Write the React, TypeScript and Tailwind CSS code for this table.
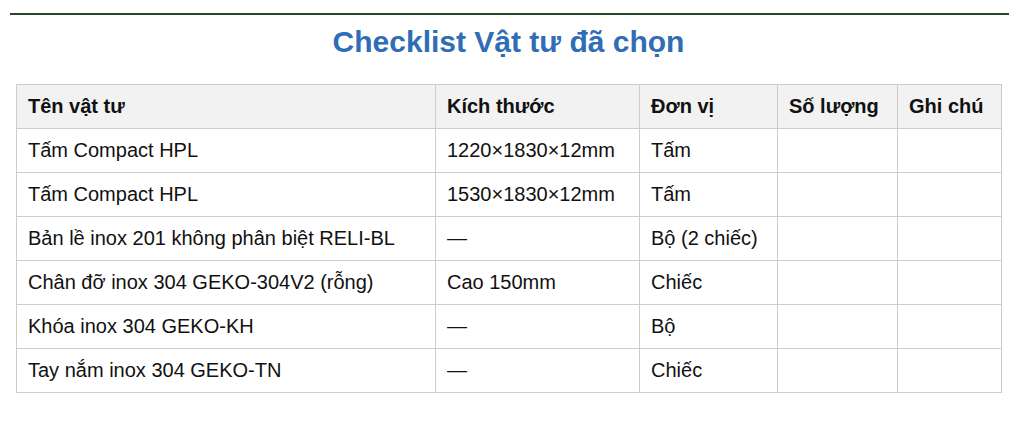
import React from "react";

const rows: [string, string, string][] = [
  ["Tấm Compact HPL", "1220×1830×12mm", "Tấm"],
  ["Tấm Compact HPL", "1530×1830×12mm", "Tấm"],
  ["Bản lề inox 201 không phân biệt RELI-BL", "—", "Bộ (2 chiếc)"],
  ["Chân đỡ inox 304 GEKO-304V2 (rỗng)", "Cao 150mm", "Chiếc"],
  ["Khóa inox 304 GEKO-KH", "—", "Bộ"],
  ["Tay nắm inox 304 GEKO-TN", "—", "Chiếc"],
];

const headers = ["Tên vật tư", "Kích thước", "Đơn vị", "Số lượng", "Ghi chú"];

export default function App() {
  return (
    <div className="w-[1017px] h-[430px] bg-white text-[#111] overflow-hidden" style={{ fontFamily: '"Liberation Sans", Arial, sans-serif' }}>
      <div className="pt-[13px] pl-[10px] pr-[8px]">
        <div className="h-[2px] bg-[#2a452a]" />
      </div>
      <h1 className="mt-[10px] text-center text-[30px] leading-[34px] font-bold text-[#2f6db5]">
        Checklist Vật tư đã chọn
      </h1>
      <div className="px-[16px] mt-[25px]">
        <table className="w-[985px] table-fixed border-collapse text-[20px] leading-[23px]">
          <colgroup>
            <col className="w-[419px]" />
            <col className="w-[204px]" />
            <col className="w-[138px]" />
            <col className="w-[120px]" />
            <col className="w-[104px]" />
          </colgroup>
          <thead>
            <tr className="bg-[#f2f2f2]">
              {headers.map((h) => (
                <th key={h} className="h-[44px] border border-[#cccccc] px-[11px] py-0 text-left font-bold">
                  {h}
                </th>
              ))}
            </tr>
          </thead>
          <tbody>
            {rows.map((r, i) => (
              <tr key={i}>
                <td className="h-[44px] border border-[#cccccc] px-[11px] py-0">{r[0]}</td>
                <td className="h-[44px] border border-[#cccccc] px-[11px] py-0">{r[1]}</td>
                <td className="h-[44px] border border-[#cccccc] px-[11px] py-0">{r[2]}</td>
                <td className="h-[44px] border border-[#cccccc] px-[11px] py-0"></td>
                <td className="h-[44px] border border-[#cccccc] px-[11px] py-0"></td>
              </tr>
            ))}
          </tbody>
        </table>
      </div>
    </div>
  );
}
